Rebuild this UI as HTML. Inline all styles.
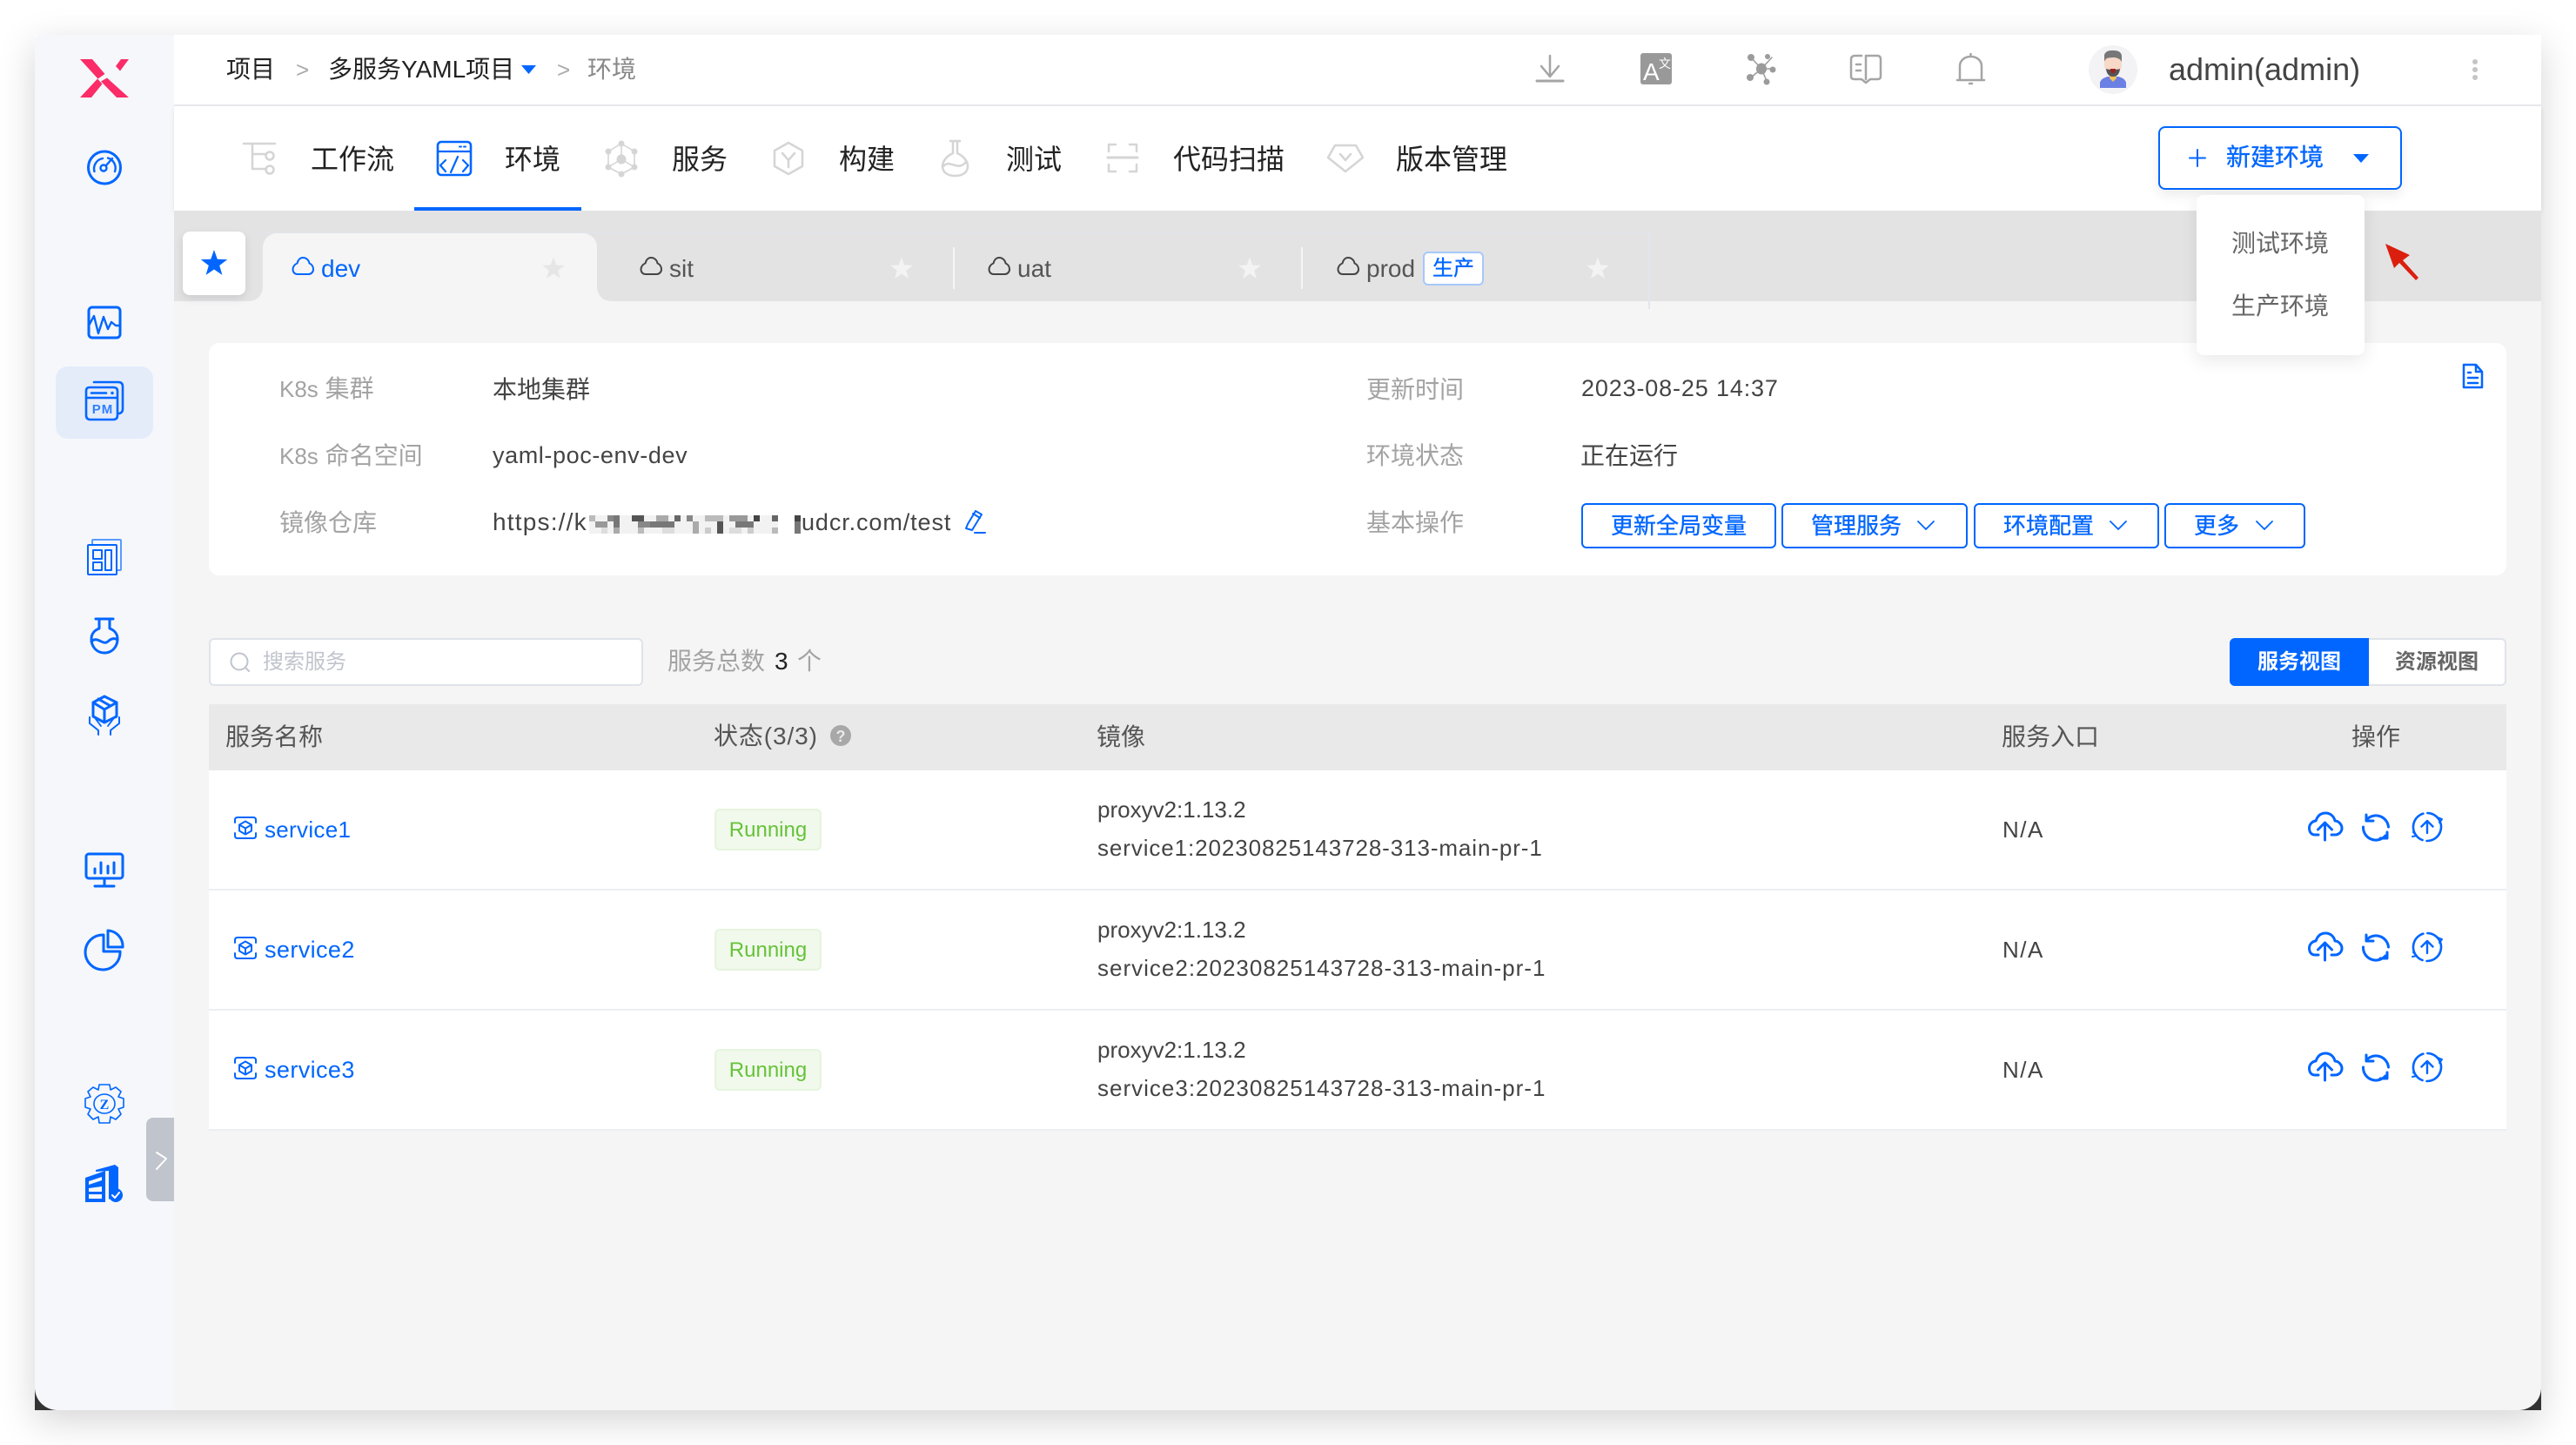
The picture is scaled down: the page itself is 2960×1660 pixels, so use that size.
<!DOCTYPE html>
<html lang="zh-CN">
<head>
<meta charset="utf-8">
<title>环境</title>
<style>
html,body{margin:0;padding:0;background:#fff}
body{width:2960px;height:1660px;position:relative;overflow:hidden;font-family:"Liberation Sans","Noto Sans CJK SC",sans-serif;color:#333}
div{position:absolute;box-sizing:border-box}
.t{position:absolute;white-space:nowrap;line-height:40px;height:40px;font-size:28px}
.g{color:#a3a3a3}.d{color:#555}.b{color:#0066ff}.k{color:#222}
.n{font-size:32px;color:#222}
.sb{-webkit-text-stroke:.35px #0066ff}
.btn{border:2px solid #0066ff;border-radius:6px;background:#fff;top:578px;height:52px}
.btn span{position:absolute;top:4px;line-height:40px;font-size:26px;color:#0066ff;white-space:nowrap;-webkit-text-stroke:.35px #0066ff}
.tag{left:821px;width:123px;height:48px;background:#f0f9eb;border:2px solid #e6f4dd;border-radius:6px;color:#67c23a;font-size:24px;line-height:46px;text-align:center}
.row{left:240px;width:2640px;height:138px;background:#fff;border-bottom:2px solid #ebeff4}
svg{position:absolute;left:0;top:0}
</style>
</head>
<body>
<!-- window -->
<div style="left:40px;top:40px;width:2880px;height:1580px;box-shadow:0 12px 40px rgba(0,0,0,.17)"></div>
<div style="left:40px;top:1590px;width:30px;height:30px;background:#333"></div>
<div style="left:2890px;top:1590px;width:30px;height:30px;background:#333"></div>
<div style="left:200px;top:40px;width:2720px;height:1580px;background:#f5f5f5;border-bottom-right-radius:26px"></div>
<div style="left:40px;top:40px;width:160px;height:1580px;background:#f5f7fb;border-bottom-left-radius:26px;border-top-left-radius:6px"></div>
<div style="left:64px;top:421px;width:112px;height:83px;background:#e4ecfa;border-radius:14px"></div>
<div style="left:168px;top:1284px;width:32px;height:96px;background:#c0c4cc;border-radius:8px 0 0 8px"></div>

<!-- header -->
<div style="left:200px;top:40px;width:2720px;height:82px;background:#fff;border-bottom:2px solid #e9eaee"></div>
<span class="t k" style="left:260px;top:60px">项目</span>
<span class="t" style="left:340px;top:60px;color:#aaa;font-size:26px">&gt;</span>
<span class="t k" style="left:377px;top:60px">多服务YAML项目</span>
<span class="t" style="left:640px;top:60px;color:#aaa;font-size:26px">&gt;</span>
<span class="t" style="left:675px;top:60px;color:#888">环境</span>
<span class="t" style="left:2492px;top:60px;font-size:36px;color:#444">admin(admin)</span>

<!-- nav -->
<div style="left:200px;top:122px;width:2720px;height:120px;background:#fff;box-shadow:0 2px 6px rgba(0,0,0,.08)"></div>
<div style="left:476px;top:238px;width:192px;height:4px;background:#0066ff"></div>
<span class="t n" style="left:357px;top:163px">工作流</span>
<span class="t n" style="left:580px;top:163px">环境</span>
<span class="t n" style="left:772px;top:163px">服务</span>
<span class="t n" style="left:964px;top:163px">构建</span>
<span class="t n" style="left:1156px;top:163px">测试</span>
<span class="t n" style="left:1348px;top:163px">代码扫描</span>
<span class="t n" style="left:1604px;top:163px">版本管理</span>

<!-- tab band -->
<div style="left:200px;top:242px;width:2720px;height:104px;background:#e3e3e4"></div>
<div style="left:296px;top:267px;width:1600px;height:88px;border-top:1px solid #e1e4ea;border-right:2px solid #e3e6ec"></div>
<div style="left:302px;top:268px;width:384px;height:78px;background:#f5f5f5;border-radius:16px 16px 0 0"></div>
<div style="left:286px;top:330px;width:16px;height:16px;background:#f5f5f5"></div>
<div style="left:286px;top:330px;width:16px;height:16px;background:#e3e3e4;border-bottom-right-radius:16px"></div>
<div style="left:686px;top:330px;width:16px;height:16px;background:#f5f5f5"></div>
<div style="left:686px;top:330px;width:16px;height:16px;background:#e3e3e4;border-bottom-left-radius:16px"></div>
<div style="left:210px;top:266px;width:72px;height:73px;background:#fff;border-radius:8px;box-shadow:0 4px 10px rgba(0,0,0,.1)"></div>
<div style="left:1095px;top:284px;width:2px;height:48px;background:#f6f6f6"></div>
<div style="left:1495px;top:284px;width:2px;height:48px;background:#f6f6f6"></div>
<span class="t b" style="left:369px;top:289px">dev</span>
<span class="t d" style="left:769px;top:289px">sit</span>
<span class="t d" style="left:1169px;top:289px">uat</span>
<span class="t d" style="left:1570px;top:289px">prod</span>
<div class="sb" style="left:1635px;top:289px;width:70px;height:39px;background:#fff;border:2px solid #a6c8fb;border-radius:6px;color:#0066ff;font-size:24px;line-height:35px;text-align:center">生产</div>

<!-- info card -->
<div style="left:240px;top:394px;width:2640px;height:267px;background:#fff;border-radius:12px"></div>
<span class="t g" style="left:321px;top:427px"><span style="font-size:26px">K8s</span> 集群</span>
<span class="t" style="left:566px;top:428px;color:#444">本地集群</span>
<span class="t g" style="left:321px;top:504px"><span style="font-size:26px">K8s</span> 命名空间</span>
<span class="t" style="left:566px;top:503px;color:#444;font-size:27px;letter-spacing:.6px">yaml-poc-env-dev</span>
<span class="t g" style="left:321px;top:581px">镜像仓库</span>
<span class="t" style="left:566px;top:580px;color:#444;font-size:28px;letter-spacing:1.2px">https://k</span>
<span class="t" style="left:921px;top:580px;color:#444;font-size:27px;letter-spacing:.9px">udcr.com/test</span>
<span class="t g" style="left:1570px;top:428px">更新时间</span>
<span class="t" style="left:1817px;top:426px;color:#444;font-size:27px;letter-spacing:.85px">2023-08-25 14:37</span>
<span class="t g" style="left:1570px;top:504px">环境状态</span>
<span class="t" style="left:1816px;top:504px;color:#444">正在运行</span>
<span class="t g" style="left:1570px;top:581px">基本操作</span>
<div class="btn" style="left:1817px;width:224px"><span style="left:32px">更新全局变量</span></div>
<div class="btn" style="left:2047px;width:214px"><span style="left:32px">管理服务</span></div>
<div class="btn" style="left:2268px;width:213px"><span style="left:32px">环境配置</span></div>
<div class="btn" style="left:2487px;width:162px"><span style="left:32px">更多</span></div>

<!-- toolbar -->
<div style="left:240px;top:733px;width:499px;height:55px;background:#fff;border:2px solid #dfe3e9;border-radius:6px"></div>
<span class="t" style="left:302px;top:741px;font-size:24px;color:#c0c4cc">搜索服务</span>
<span class="t g" style="left:767px;top:740px">服务总数</span>
<span class="t k" style="left:890px;top:740px">3</span>
<span class="t g" style="left:916px;top:740px">个</span>
<div style="left:2722px;top:733px;width:158px;height:55px;background:#fff;border:2px solid #dfe3e9;border-left:0;border-radius:0 6px 6px 0"></div>
<div style="left:2562px;top:733px;width:160px;height:55px;background:#0066ff;border-radius:6px 0 0 6px"></div>
<span class="t" style="left:2594px;top:741px;font-size:24px;color:#fff;font-weight:700">服务视图</span>
<span class="t" style="left:2752px;top:741px;font-size:24px;color:#666;font-weight:700">资源视图</span>

<!-- table -->
<div style="left:240px;top:809px;width:2640px;height:76px;background:#e9e9e9"></div>
<span class="t d" style="left:259px;top:827px">服务名称</span>
<span class="t d" style="left:820px;top:826px;letter-spacing:.9px">状态(3/3)</span>
<span class="t d" style="left:1260px;top:827px">镜像</span>
<span class="t d" style="left:2300px;top:827px">服务入口</span>
<span class="t d" style="left:2702px;top:827px">操作</span>

<div class="row" style="top:885px"></div>
<div class="row" style="top:1023px"></div>
<div class="row" style="top:1161px"></div>

<span class="t b" style="left:304px;top:933px;font-size:26px;letter-spacing:.3px">service1</span>
<span class="t b" style="left:304px;top:1071px;font-size:27px;letter-spacing:.4px">service2</span>
<span class="t b" style="left:304px;top:1209px;font-size:27px;letter-spacing:.4px">service3</span>
<div class="tag" style="top:929px">Running</div>
<div class="tag" style="top:1067px">Running</div>
<div class="tag" style="top:1205px">Running</div>
<span class="t" style="left:1261px;top:910px;font-size:26px;color:#444">proxyv2:1.13.2</span>
<span class="t" style="left:1261px;top:954px;font-size:26px;color:#444;letter-spacing:.9px">service1:20230825143728-313-main-pr-1</span>
<span class="t" style="left:1261px;top:1048px;font-size:26px;color:#444">proxyv2:1.13.2</span>
<span class="t" style="left:1261px;top:1092px;font-size:26px;color:#444;letter-spacing:1px">service2:20230825143728-313-main-pr-1</span>
<span class="t" style="left:1261px;top:1186px;font-size:26px;color:#444">proxyv2:1.13.2</span>
<span class="t" style="left:1261px;top:1230px;font-size:26px;color:#444;letter-spacing:1px">service3:20230825143728-313-main-pr-1</span>
<span class="t" style="left:2301px;top:933px;font-size:26px;color:#444;letter-spacing:1.500px">N/A</span>
<span class="t" style="left:2301px;top:1071px;font-size:26px;color:#444;letter-spacing:1.500px">N/A</span>
<span class="t" style="left:2301px;top:1209px;font-size:26px;color:#444;letter-spacing:1.500px">N/A</span>

<!-- dropdown + button -->
<div style="left:2480px;top:145px;width:280px;height:73px;background:#fff;border:2px solid #0066ff;border-radius:8px;box-shadow:0 6px 14px rgba(0,0,0,.08)"></div>
<span class="t b sb" style="left:2558px;top:161px">新建环境</span>
<div style="left:2524px;top:224px;width:193px;height:184px;background:#fff;border-radius:8px;box-shadow:0 6px 20px rgba(0,0,0,.09)"></div>
<span class="t" style="left:2564px;top:260px;color:#666">测试环境</span>
<span class="t" style="left:2564px;top:332px;color:#666">生产环境</span>

<!-- icons -->
<svg width="2960" height="1660" viewBox="0 0 2960 1660" fill="none" stroke-linecap="round" stroke-linejoin="round">
<defs>
<path id="star" d="M0-16 3.8-5.3 15.2-4.9 6.2 2 9.4 12.9 0 6.5-9.4 12.9-6.2 2-15.2-4.9-3.8-5.3Z"/>
<path id="cloud" d="M6 19C2 19 .5 16 .5 13.500.5 10 3 7.500 5.500 6.500 6.500 2.500 9 0 12 0c4 0 7 3 7.500 6.500 2.500 1 4.500 3.500 4.500 7 0 3-2.500 5.500-5.500 5.500Z" stroke-width="2"/>
<g id="svc" stroke="#0066ff" stroke-width="2">
<path d="M1 7V4Q1 1 4 1H22Q25 1 25 4V7M1 19V22Q1 25 4 25H22Q25 25 25 22V19"/>
<path d="M13 5.500 20 9.500V16.500L13 20.500 6 16.500V9.500ZM6 9.500 13 13.500 20 9.500M13 13.500V20.500"/>
</g>
<g id="ops" stroke="#0066ff" stroke-width="3">
<path d="M2664 959H2660C2654 959 2653.500 953 2653.500 951.500 2653.500 946 2658 943 2661 943 2663 937 2667 934 2672 934 2678 934 2682 938 2683 943 2687 943 2691 947 2691 951.500 2691 956 2687 959 2683 959H2679"/>
<path d="M2671.500 965V946M2663.500 953 2671.500 945 2679.500 953"/>
<path d="M2720 941A14.500 14.500 0 0 1 2744.500 950M2715.500 950A14.500 14.500 0 0 0 2741 960"/>
<path d="M2719 936V943H2727M2743 956V963H2735"/>
<circle cx="2789" cy="950" r="16" stroke-width="2.600" stroke-dasharray="34 5 40 5" transform="rotate(-30 2789 950)"/>
<path d="M2789 957V943M2782.500 949.500 2789 943 2795.500 949.500" stroke-width="2.400"/>
<path d="M2801 939 2806 941 2803 945" stroke-width="2"/>
<path d="M2773 956 2777 960 2772 961" stroke-width="2"/>
</g>
</defs>

<!-- breadcrumb triangle -->
<path d="M599 75H616L607.500 85Z" fill="#0066ff"/>

<!-- logo -->
<g fill="#fb2c68">
<path d="M92 68H106L120.500 85 112.500 90.500Z"/>
<path d="M133 76 139 68H148L138 81.500Z"/>
<path d="M92 112 112 90.500 117.500 96.500 105 112Z"/>
<path d="M116 93.500 123 89.500 148 112H134Z"/>
</g>

<!-- side icons -->
<g stroke="#0066ff" stroke-width="3">
<circle cx="120" cy="192.500" r="18.500"/>
<path d="M108.500 197A12 12 0 0 1 118 182M124 181.500A12 12 0 0 1 132 197" stroke-width="2.400"/>
<circle cx="119" cy="193" r="3.500" stroke-width="2.400"/>
<path d="M122 190 129 182" stroke-width="2.400"/>
<rect x="102" y="353" width="36" height="35" rx="4"/>
<path d="M102 374 108 363 113 383 119 364 124 378 128 370 133 374H138" stroke-width="2.400"/>
<path d="M108 439H136Q141 439 141 444V470Q141 474 137 475M99 449Q99 445 103 445H130Q135 445 135 449V477Q135 482 130 482H104Q99 482 99 477ZM99 457H135" stroke-width="2.600"/>
<path d="M105 451.500H122" stroke-width="2.600"/>
<circle cx="129" cy="451.500" r="1" stroke-width="1.500"/>
<rect x="106" y="620" width="33" height="35" rx="1" stroke-width="2" stroke="#5b9bff"/>
<rect x="101" y="626" width="33" height="34" rx="1" fill="#f5f7fb" stroke-width="2"/>
<rect x="107" y="632" width="10" height="10" stroke-width="2"/>
<rect x="107" y="646" width="10" height="9" stroke-width="2"/>
<rect x="121" y="632" width="7" height="23" stroke-width="2"/>
<path d="M110 711H130M114 711V722C106 725 105 731 105 734 105 744 112 750 120 750 128 750 135 744 135 734 135 731 134 725 126 722V711"/>
<path d="M105 737C112 730 118 742 124 737 128 733 132 733 135 735"/>
<path d="M120 800 134 807V823L120 830 107 823V807ZM107 807 120 815 134 807M120 815V830M113 803 127 811"/>
<path d="M103 824V831L113 839V844M137 824V831L127 839V844" stroke-width="2"/>
<path d="M110 826 116 834M130 826 124 834" stroke-width="1.800"/>
<rect x="99" y="981" width="42" height="28" rx="3"/>
<path d="M120 1009V1017M109 1018H131M109 1003V998M116 1003V991M124 1003V995M131 1003V991" />
<path d="M119 1074A20 20 0 1 0 138 1093H119Z"/>
<path d="M124 1069A18 18 0 0 1 141 1088H124Z"/>
<g stroke-width="1.600">
<path d="M114 1246H126L127 1252 133 1249 139 1254 136 1260 142 1262V1272L136 1274 139 1280 133 1286 127 1283 126 1290H114L113 1283 107 1286 101 1280 104 1274 98 1272V1262L104 1260 101 1254 107 1249 113 1252Z"/>
<ellipse cx="120" cy="1268" rx="12" ry="11"/>
</g>
</g>
<text x="120" y="1274" text-anchor="middle" font-size="16" fill="#0066ff" font-family="Liberation Serif" font-weight="700">Z</text>
<text x="118" y="475" text-anchor="middle" font-size="15" font-weight="700" fill="#2f7fff" font-family="Liberation Sans" letter-spacing="1">PM</text>
<g fill="#0066ff">
<path d="M98 1353 121 1345V1381H98ZM102 1357V1361L117 1356V1352ZM102 1365V1369H117V1363ZM102 1372V1377H117V1372Z" fill-rule="evenodd"/>
<path d="M110 1344 132 1338 136 1341V1367L125 1378V1345L110 1346Z"/>
<circle cx="133" cy="1373" r="8"/>
</g>
<path d="M129 1373 132 1376 137 1370" stroke="#fff" stroke-width="2"/>
<path d="M180 1324 191 1331 180 1343" stroke="#fff" stroke-width="2"/>

<!-- nav icons -->
<g stroke="#d5d5d5" stroke-width="2.500">
<path d="M280 165H316M290 165V194H306M290 177H306"/>
<circle cx="310" cy="179" r="4.500"/><circle cx="310" cy="195" r="4.500"/>
<path d="M699 174 714 165 729 174V192L714 200 699 192ZM714 165V183M699 192 714 183 729 192"  stroke-width="1.600"/>
<g fill="#d5d5d5" stroke="none">
<circle cx="714" cy="165" r="3.500"/><circle cx="729" cy="174" r="3.500"/><circle cx="729" cy="192" r="3.500"/>
<circle cx="714" cy="200" r="3.500"/><circle cx="699" cy="192" r="3.500"/><circle cx="699" cy="174" r="3.500"/>
<circle cx="714" cy="183" r="5.500"/>
</g>
<path d="M906 164 922 173V191L906 200 890 191V173ZM899 176 906 184 913 176M906 184V192"/>
<path d="M1092 162H1103M1095 162V176C1086 180 1083 187 1083 191 1083 198 1089 202 1097.500 202 1106 202 1112 198 1112 191 1112 187 1109 180 1100 176V162"/>
<path d="M1084 191C1092 182 1100 198 1110 186"/>
<path d="M1274 174V166H1282M1298 166H1306V174M1274 189V197H1282M1298 197H1306V189"/>
<path d="M1273 181H1307" stroke-width="3"/>
<path d="M1534 167H1558L1566 181 1546 197 1526 181ZM1540 177 1546 184 1552 177"/>
</g>
<rect x="503" y="163" width="38" height="38" rx="4" stroke="#0066ff" stroke-width="2.600"/>
<path d="M503 174H541M512 184 506 190 512 197M532 184 538 190 532 197M526 180 518 198" stroke="#0066ff" stroke-width="2.200"/>
<path d="M528 168.500H530M533 168.500H535" stroke="#0066ff" stroke-width="2"/>

<!-- header icons -->
<g stroke="#a5a5a5" stroke-width="2.500">
<path d="M1781 64V88M1771 76 1781 88 1791 76"/>
<path d="M1766 93H1796" stroke-width="3"/>
</g>
<rect x="1885" y="61" width="36" height="36" rx="3" fill="#999"/>
<text x="1888" y="92" font-size="28" fill="#fff" font-family="Liberation Sans">A</text>
<text x="1906" y="78" font-size="14" fill="#fff" font-family="Noto Sans CJK SC">文</text>
<path d="M2012 66 2024 79 2036 66M2024 79H2038M2012 89 2024 79 2030 93" stroke="#9b9b9b" stroke-width="1.500"/>
<g fill="#9b9b9b">
<ellipse cx="2024" cy="79" rx="6" ry="6.500"/><circle cx="2012" cy="66" r="4"/><circle cx="2036" cy="65" r="0"/><circle cx="2031" cy="65" r="3"/>
<circle cx="2037" cy="80" r="3.500"/><circle cx="2011" cy="89" r="4"/><circle cx="2030" cy="94" r="3.500"/>
</g>
<g stroke="#a5a5a5" stroke-width="2.500">
<path d="M2139 64H2132Q2127 64 2127 68V88Q2127 91 2131 91H2139L2144 95 2149 91H2157Q2161 91 2161 88V68Q2161 64 2157 64H2144V91"/>
<path d="M2133 74H2138M2133 81H2138"/>
<path d="M2249 92H2280M2252 92V76C2252 69 2258 65 2264.500 65 2271 65 2277 69 2277 76V92M2264.500 62V65M2263 96H2266"/>
</g>
<circle cx="2428" cy="80" r="28" fill="#f3f3f6"/>
<path d="M2413 101V95Q2414 90 2422 88H2434Q2442 90 2443 95V101Z" fill="#6a80e4"/>
<path d="M2424 90 2428 94 2432 90V85H2424Z" fill="#f0c060"/>
<ellipse cx="2428" cy="74" rx="10" ry="13" fill="#f8d8c6"/>
<path d="M2418 71V63Q2420 57 2429 58 2437 58 2438 64V71Q2436 67 2430 66 2423 66 2421 67 2419 68 2418 71Z" fill="#777"/>
<path d="M2420 79Q2421 88 2428 88 2435 88 2436 79 2433 80 2428 80 2423 80 2420 79Z" fill="#555"/>
<path d="M2425 79H2431Q2431 84 2428 84 2425 84 2425 79Z" fill="#a02020"/>
<g fill="#c5c5c5"><circle cx="2844" cy="71" r="3"/><circle cx="2844" cy="80" r="3"/><circle cx="2844" cy="89" r="3"/></g>

<!-- new env button -->
<path d="M2525 172V191M2516 181.500H2534" stroke="#0066ff" stroke-width="2"/>
<path d="M2704 177H2722L2713 187Z" fill="#0066ff"/>

<!-- red arrow -->
<path d="M2741 280 2769 293 2761 299 2779 319 2776 322 2757 302 2751 308Z" fill="#db1f0e"/>

<!-- tab icons -->
<use href="#star" transform="translate(246 303)" fill="#0066ff"/>
<use href="#star" transform="translate(636 309) scale(.85)" fill="#e6e6e6"/>
<use href="#star" transform="translate(1036 309) scale(.85)" fill="#f3f3f3"/>
<use href="#star" transform="translate(1436 309) scale(.85)" fill="#f3f3f3"/>
<use href="#star" transform="translate(1836 309) scale(.85)" fill="#f3f3f3"/>
<use href="#cloud" x="336" y="296" stroke="#0066ff"/>
<use href="#cloud" x="736" y="296" stroke="#444"/>
<use href="#cloud" x="1136" y="296" stroke="#444"/>
<use href="#cloud" x="1537" y="296" stroke="#444"/>

<!-- doc icon -->
<path d="M2831 419H2845L2852 427V445H2831ZM2845 419V427H2852" stroke="#0066ff" stroke-width="2.500"/>
<path d="M2836 428H2839M2836 434H2847M2836 440H2847" stroke="#0066ff" stroke-width="2.500"/>

<!-- mosaic -->
<g>
<rect x="677" y="592" width="243" height="21" fill="#f2f2f2"/>
<rect x="677" y="592" width="7" height="7" fill="#bbb"/><rect x="684" y="599" width="14" height="7" fill="#999"/><rect x="698" y="592" width="7" height="7" fill="#888"/>
<rect x="705" y="592" width="7" height="14" fill="#777"/><rect x="691" y="606" width="7" height="7" fill="#ddd"/><rect x="705" y="606" width="7" height="7" fill="#aaa"/>
<rect x="726" y="592" width="14" height="7" fill="#555"/><rect x="733" y="599" width="14" height="7" fill="#888"/><rect x="733" y="606" width="7" height="7" fill="#bbb"/>
<rect x="754" y="592" width="14" height="7" fill="#aaa"/><rect x="747" y="599" width="28" height="7" fill="#777"/><rect x="761" y="606" width="14" height="7" fill="#ddd"/>
<rect x="775" y="592" width="7" height="7" fill="#666"/><rect x="789" y="592" width="7" height="7" fill="#888"/><rect x="796" y="599" width="7" height="14" fill="#aaa"/>
<rect x="810" y="592" width="21" height="7" fill="#bbb"/><rect x="824" y="599" width="7" height="14" fill="#555"/><rect x="810" y="606" width="7" height="7" fill="#ccc"/>
<rect x="838" y="592" width="21" height="7" fill="#999"/><rect x="845" y="599" width="21" height="7" fill="#777"/><rect x="866" y="592" width="7" height="7" fill="#444"/>
<rect x="838" y="606" width="14" height="7" fill="#ddd"/><rect x="859" y="606" width="7" height="7" fill="#ccc"/>
<rect x="887" y="592" width="7" height="7" fill="#666"/><rect x="887" y="606" width="7" height="7" fill="#bbb"/>
<rect x="913" y="592" width="7" height="7" fill="#444"/><rect x="913" y="599" width="7" height="7" fill="#777"/><rect x="913" y="606" width="7" height="7" fill="#777"/>
<rect x="894" y="592" width="19" height="21" fill="#fff"/>
</g>
<!-- pen -->
<path d="M1121 587 1128 591 1117 609 1110 607 1112 602Z" stroke="#0066ff" stroke-width="2"/>
<path d="M1120 612H1132M1118 590 1126 595" stroke="#0066ff" stroke-width="2"/>

<!-- button chevrons -->
<g stroke="#0066ff" stroke-width="1.800">
<path d="M2204 599 2213 608 2222 599M2425 599 2434 608 2443 599M2593 599 2602 608 2611 599"/>
</g>

<!-- search icon -->
<circle cx="275" cy="760" r="9.500" stroke="#c0c4cc" stroke-width="2"/>
<path d="M282 767 286 771" stroke="#c0c4cc" stroke-width="2"/>

<!-- help -->
<circle cx="966" cy="845" r="12" fill="#a8a8a8"/>
<text x="966" y="852" text-anchor="middle" font-size="18" font-weight="700" fill="#e9e9e9" font-family="Liberation Sans">?</text>

<!-- row icons -->
<use href="#svc" x="269" y="938"/><use href="#svc" x="269" y="1076"/><use href="#svc" x="269" y="1214"/>
<use href="#ops"/><use href="#ops" y="138"/><use href="#ops" y="276"/>
</svg>
</body>
</html>
